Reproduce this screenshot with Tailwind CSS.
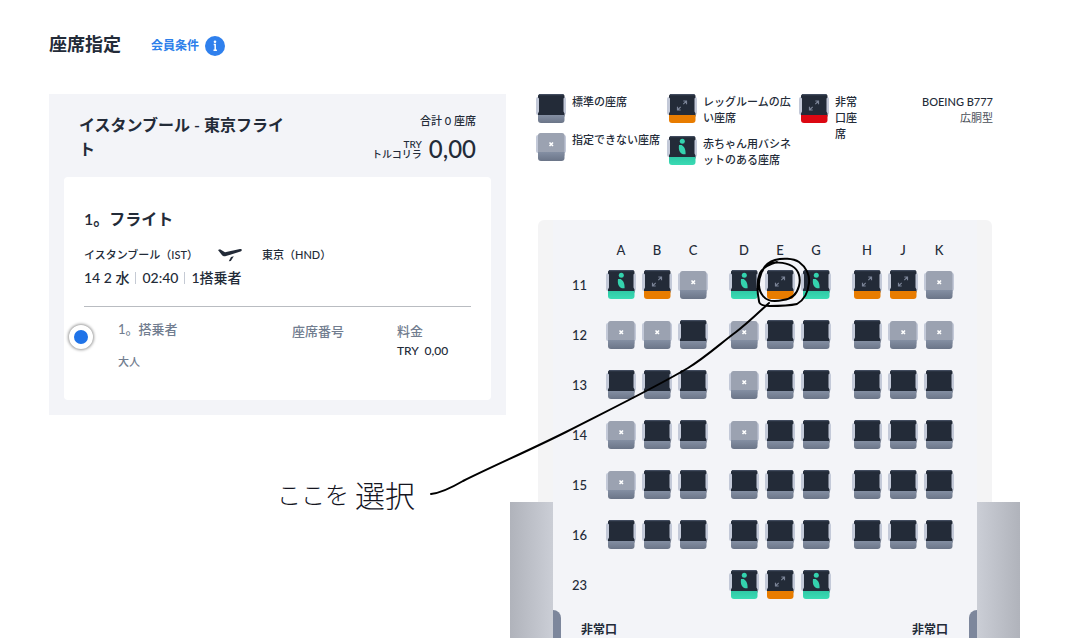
<!DOCTYPE html>
<html lang="ja">
<head>
    <meta charset="UTF-8">
    <meta name="viewport" content="width=device-width, initial-scale=1.0">
    <title>座席指定</title>
    <script src="https://cdn.jsdelivr.net/npm/@tailwindcss/browser@4"></script>
</head>
<body class="bg-white text-[#232b38] font-['Lato','Noto_Sans_CJK_JP',sans-serif]">
    <!-- seat icons -->
    <svg class="absolute w-0 h-0">
        <defs>
            <linearGradient id="greyBase" x1="0" y1="0" x2="0" y2="1">
                <stop offset="0" stop-color="#848fa3"/><stop offset="1" stop-color="#6b7588"/>
            </linearGradient>
            <linearGradient id="greenBase" x1="0" y1="0" x2="0" y2="1">
                <stop offset="0" stop-color="#2fc9a6"/><stop offset="1" stop-color="#3adbb4"/>
            </linearGradient>
            <symbol id="back" viewBox="0 0 30 30">
                <rect x="0" y="3" width="30" height="18" rx="2" fill="#c3c9d8"/>
                <path d="M3.500 0h23.500l1.500 1.500v2l-1 1v13l1 2v3h-26.500v-3l1-2v-13l-1-1v-2z" fill="#232b38"/>
                <path d="M3.500 0h23.500l1.200 1.200h-25.900z" fill="#414b5e"/>
            </symbol>
            <symbol id="standard" viewBox="0 0 30 30">
                <use href="#back"/>
                <path d="M2 21h26.500v5a3 3 0 0 1-3 3h-20.500a3 3 0 0 1-3-3z" fill="url(#greyBase)"/>
            </symbol>
            <symbol id="arrows" viewBox="0 0 30 30">
                <path d="M16.300 10.200l3-3M13.700 12.800l-3 3M16.300 7h3.200v3.200M10.500 12.800v3.200h3.200" fill="none" stroke="#7b8497" stroke-width="1.200"/>
            </symbol>
            <symbol id="legroom" viewBox="0 0 30 30">
                <use href="#back"/>
                <path d="M2 21h26.500v5a3 3 0 0 1-3 3h-20.500a3 3 0 0 1-3-3z" fill="#e87c00"/>
                <use href="#arrows"/>
            </symbol>
            <symbol id="exit" viewBox="0 0 30 30">
                <use href="#back"/>
                <path d="M2 21h26.500v5a3 3 0 0 1-3 3h-20.500a3 3 0 0 1-3-3z" fill="#dc0712"/>
                <use href="#arrows"/>
            </symbol>
            <symbol id="bassinet" viewBox="0 0 30 30">
                <use href="#back"/>
                <path d="M2 21h26.500v5a3 3 0 0 1-3 3h-20.500a3 3 0 0 1-3-3z" fill="url(#greenBase)"/>
                <circle cx="15.300" cy="5.300" r="2.500" fill="#34d3ae"/>
                <path d="M12 9h2.700c2.500 1.600 4.100 4 3.900 9.200h-2.600c-3.400-1.200-4.700-4.500-4-9.200z" fill="#34d3ae"/>
            </symbol>
            <symbol id="blocked" viewBox="0 0 30 30">
                <rect x="0" y="3" width="30" height="18" rx="2" fill="#c3c9d8"/>
                <rect x="2" y="1" width="26.500" height="24" rx="2.500" fill="#9ba2b1"/>
                <path d="M2 20h26.500v6a3 3 0 0 1-3 3h-20.500a3 3 0 0 1-3-3z" fill="url(#greyBase)"/>
                <path d="M13.500 10.500l3.500 3.500M17 10.500l-3.500 3.500" stroke="#fff" stroke-width="1.600"/>
            </symbol>
        </defs>
    </svg>

    <div class="relative min-h-screen pl-[49px] pr-[47px] pt-8">
        <header class="flex items-center h-6 mb-[38px]">
            <h1 class="text-lg leading-6 font-bold">座席指定</h1>
            <a href="#" class="flex items-center gap-[6px] ml-[30px] pt-1 text-xs font-bold text-[#2d7fea]">
                会員条件
                <svg class="w-5 h-5" viewBox="0 0 20 20">
                    <circle cx="10" cy="10" r="10" fill="#2f80ed"/>
                    <circle cx="10" cy="5.700" r="1.300" fill="#fff"/>
                    <path d="M8.700 8.600h1.500v5.700M8.500 14.300h3.400" fill="none" stroke="#fff" stroke-width="1.500"/>
                </svg>
            </a>
        </header>

        <main class="grid grid-cols-[457fr_510fr] gap-1 items-start">
            <!-- flight summary -->
            <section class="bg-[#f3f4f8] px-[15px] pb-[15px]">
                <div class="flex justify-between px-[15px] pt-[19px] pb-3">
                    <h2 class="w-[212px] text-base leading-6 font-semibold">イスタンブール - 東京フライト</h2>
                    <div class="text-right font-medium">
                        <p class="text-[11px] leading-4">合計 0 座席</p>
                        <div class="flex items-center justify-end gap-[7px] mt-1">
                            <p class="text-[10px] leading-[10px]">TRY<br>トルコリラ</p>
                            <p class="text-2xl leading-8">0,00</p>
                        </div>
                    </div>
                </div>

                <div class="bg-white rounded px-5 pt-[30px] pb-7">
                    <h3 class="text-base leading-6 font-semibold">1。フライト</h3>
                    <div class="flex items-center mt-4 text-[11px] leading-4 font-medium">
                        <span>イスタンブール（IST）</span>
                        <svg class="w-6 h-4 mx-5" viewBox="0 0 24 16">
                            <path d="M0 3l2-.7 5 3 15-3.300c2-.4 2.600 1.800.5 2.600l-14.500 4.500c-2 .5-3.300 0-4.300-1.300z" fill="#232b38"/>
                            <path d="M13 10l2.800-.8-3 4.800-2 .3z" fill="#232b38"/>
                        </svg>
                        <span>東京（HND）</span>
                    </div>
                    <div class="flex items-center mt-[5px] text-sm leading-5 font-medium">
                        <span class="pr-[6px]">14 2 水</span>
                        <span class="flex items-center before:h-3 before:border-l before:border-[#c5cad4] before:mr-[6px] pr-[6px]">02:40</span>
                        <span class="flex items-center before:h-3 before:border-l before:border-[#c5cad4] before:mr-[6px]">1搭乗者</span>
                    </div>
                    <hr class="mt-[18px] border-[#b9bcc1]">

                    <div class="flex items-start gap-[25px] -ml-[15px] pt-3">
                        <input type="radio" id="pax1" name="pax" checked class="appearance-none w-6 h-6 mt-[6px] shrink-0 rounded-full border-5 border-white bg-[#1f73e8] shadow-[0_0_3px_1px_#00000066]">
                        <div class="flex-1 grid grid-cols-[174fr_105fr_74fr] text-[13px] leading-5 font-medium text-[#717d8f]">
                            <label for="pax1">
                                <span class="block">1。搭乗者</span>
                                <span class="block mt-[13px] text-[11px]">大人</span>
                            </label>
                            <p class="pt-[2px]">座席番号</p>
                            <div class="pt-[2px]">
                                <p>料金</p>
                                <p class="text-xs leading-5 text-[#232b38]">TRY&nbsp; 0,00</p>
                            </div>
                        </div>
                    </div>
                </div>
            </section>

            <!-- seat map -->
            <section class="relative">
                <div class="flex justify-between pl-[26px] pr-[27px] text-[11px] leading-4 font-medium">
                    <div class="flex">
                        <ul class="w-[131px] space-y-2">
                            <li class="flex gap-[6px]"><svg class="w-[30px] h-[30px] shrink-0"><use href="#standard"/></svg>標準の座席</li>
                            <li class="flex gap-[6px]"><svg class="w-[30px] h-[30px] shrink-0"><use href="#blocked"/></svg>指定できない座席</li>
                        </ul>
                        <ul class="w-[132px] space-y-[10px]">
                            <li class="flex gap-[6px]"><svg class="w-[30px] h-[30px] shrink-0"><use href="#legroom"/></svg>レッグルームの広い座席</li>
                            <li class="flex gap-[6px]"><svg class="w-[30px] h-[30px] shrink-0"><use href="#bassinet"/></svg>赤ちゃん用バシネットのある座席</li>
                        </ul>
                        <ul class="w-[60px]">
                            <li class="flex gap-[6px]"><svg class="w-[30px] h-[30px] shrink-0"><use href="#exit"/></svg>非常口座席</li>
                        </ul>
                    </div>
                    <div class="text-right whitespace-nowrap">
                        <p>BOEING B777</p>
                        <p class="font-normal text-[#4a4f58]">広胴型</p>
                    </div>
                </div>

                <div class="mx-7 mt-[52px] px-[15px] rounded-t-md bg-[#f4f4f5]">
                    <div class="bg-[#f3f4f8] pt-5 pl-[19px] pr-[23px]">
                        <div id="letters" class="flex justify-between pl-[34px] text-[13px] leading-5 font-medium"></div>
                        <div id="rows" class="mt-[10px] space-y-5"></div>
                        <div class="flex justify-between pt-[22px] pl-[9px] pr-[6px] text-xs leading-4 font-bold">
                            <span>非常口</span>
                            <span>非常口</span>
                        </div>
                    </div>
                </div>

                <!-- wings and exit doors lie over the cabin -->
                <div class="absolute left-0 bottom-0 w-[43px] h-[136px] bg-linear-to-r from-[#b0b3bb] to-[#cbced6]"></div>
                <div class="absolute right-0 bottom-0 w-[43px] h-[136px] bg-linear-to-l from-[#b0b3bb] to-[#cbced6]"></div>
                <div class="absolute left-[43px] bottom-0 w-2 h-7 rounded-tr-lg bg-[#7d879c]"></div>
                <div class="absolute right-[43px] bottom-0 w-2 h-7 rounded-tl-lg bg-[#7d879c]"></div>
            </section>
        </main>

        <!-- pen note over the page -->
        <p class="absolute left-[277px] top-[474px] flex items-center gap-[6px] leading-10 font-light text-[#15151f] font-['Noto_Sans_CJK_JP',sans-serif]"><span class="text-2xl leading-10">ここを</span><span class="text-3xl leading-10">選択</span></p>
        <svg class="absolute left-0 top-0 w-[820px] h-[520px] pointer-events-none" viewBox="0 0 820 520" fill="none" stroke="#000" stroke-width="2" stroke-linecap="round" stroke-linejoin="round">
            <path d="M431 494c10-1 20-6 32-13 30-15 65-30 103-49 45-23 90-45 122-64 18-11 33-25 48-36 12-9 22-19 33-29"/>
            <path d="M766 266C772 261 785 262 792 266C799 270 801 278 799 286C797 294 792 299 783 300C775 302 767 301 763 296C758 290 758 281 761 274C763 268 768 262 775 260C782 258 793 258 799 262C806 267 810 275 809 283C808 293 804 300 797 304C788 306 775 306 769 306C763 306 759 304 759 301C757 291 757 280 760 273C763 267 770 264 777 262"/>
        </svg>
    </div>

    <script>
        // s standard, l legroom, b bassinet, x blocked, . no seat
        const types = { s: "standard", l: "legroom", b: "bassinet", x: "blocked" };
        const letters = ["ABC", "DEG", "HJK"];
        const rows = {
            11: ["blx", "blb", "llx"],
            12: ["xxs", "xss", "sxx"],
            13: ["sss", "xss", "sss"],
            14: ["xss", "xss", "sss"],
            15: ["xss", "sss", "sss"],
            16: ["sss", "sss", "sss"],
            23: ["...", "blb", "..."]
        };

        document.getElementById("letters").innerHTML = letters.map(group => `
            <div class="flex gap-[6px]">
                ${[...group].map(l => `<span class="w-[30px] text-center">${l}</span>`).join("")}
            </div>
        `).join("");

        document.getElementById("rows").innerHTML = Object.keys(rows).map(n => `
            <div class="flex items-center">
                <span class="w-[34px] shrink-0 text-[13px] leading-5 font-medium">${n}</span>
                <div class="flex-1 flex justify-between">
                    ${rows[n].map((group, g) => `
                        <div class="flex gap-[6px]">
                            ${[...group].map((s, i) => s === "."
                                ? `<span class="w-[30px] h-[30px]"></span>`
                                : `<button aria-label="${n}${letters[g][i]}" class="w-[30px] h-[30px]" ${s === "x" ? "disabled" : ""}><svg class="w-[30px] h-[30px]"><use href="#${types[s]}"/></svg></button>`
                            ).join("")}
                        </div>
                    `).join("")}
                </div>
            </div>
        `).join("");
    </script>
</body>
</html>
